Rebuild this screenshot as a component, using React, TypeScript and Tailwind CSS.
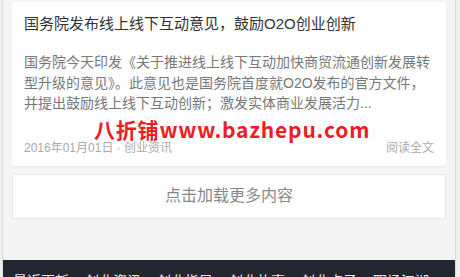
export default function App() {
  const footerLinks = ["最近更新", "创业资讯", "创业指导", "创业故事", "创业点子", "职场江湖"];
  return (
    <div className="flex h-[277px] overflow-hidden bg-[#efefef] font-['Liberation_Sans','Noto_Sans_CJK_SC',sans-serif]">
      <div className="ml-[2px] flex w-[454px] flex-col border-x border-[#dcdcdc] bg-[#f4f4f4]">
        <div className="relative mx-[9px] mt-[2px] shrink-0 rounded-[3px] bg-white px-[12px] pt-[11px] pb-[9px] shadow-[0_1px_2px_rgba(0,0,0,0.06)]">
          <h2 className="text-[15px] leading-[22px] text-[#333]">国务院发布线上线下互动意见，鼓励O2O创业创新</h2>
          <p className="mt-[17px] text-[14px] leading-[20.5px] text-[#777]">
            国务院今天印发《关于推进线上线下互动加快商贸流通创新发展转型升级的意见》。此意见也是国务院首度就O2O发布的官方文件，并提出鼓励线上线下互动创新；激发实体商业发展活力...
          </p>
          <div className="mt-[25px] flex items-center justify-between text-[12px] leading-[18px] text-[#aaa]">
            <span>2016年01月01日 · 创业资讯</span>
            <span>阅读全文</span>
          </div>
          <span className="absolute top-[117px] left-[82px] whitespace-nowrap font-['Noto_Sans_CJK_SC',sans-serif] text-[21px] font-bold leading-none tracking-[0.8px] text-[#ee1c25]">
            八折铺www.bazhepu.com
          </span>
        </div>
        <button className="mx-[9px] mt-[8px] h-[45px] shrink-0 border border-[#e6e6e6] bg-white text-[16px] text-[#888]">
          点击加载更多内容
        </button>
        <div className="mt-[41px] h-[60px] shrink-0 bg-[#212630] px-[10px] pt-[11px]">
          <div className="flex gap-4 whitespace-nowrap text-[14px] leading-[20px] text-[#e6e6e6]">
            {footerLinks.map((l) => (
              <span key={l}>{l}</span>
            ))}
          </div>
        </div>
      </div>
    </div>
  );
}
